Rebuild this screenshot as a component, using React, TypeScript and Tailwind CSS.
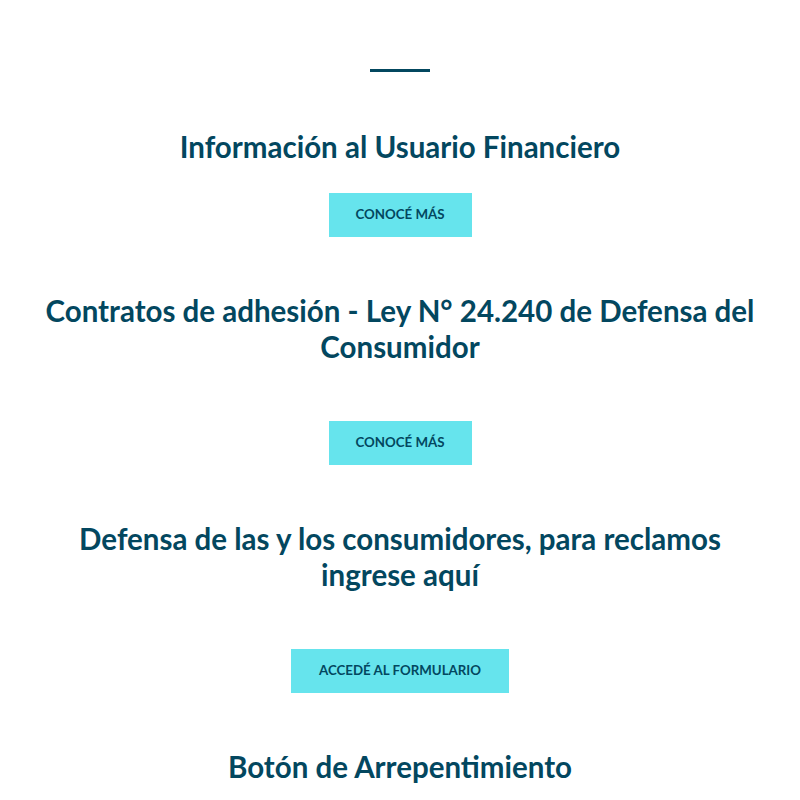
export default function App() {
  const titleCls =
    "text-center text-[#03475f] font-bold text-[29.5px] leading-[36px] px-[40px]";
  const btnCls =
    "mx-auto flex items-center justify-center h-[44px] bg-[#66e4ed] text-[#03475f] font-bold text-[13.3px]";
  const font = { fontFamily: '"Lato", "Open Sans", sans-serif' };
  return (
    <div className="w-[800px] h-[800px] overflow-hidden bg-white" style={font}>
      <div className="mx-auto mt-[69px] w-[60px] h-[3px] bg-[#03475f]" />
      <h2 className={`${titleCls} mt-[57px]`}>Información al Usuario Financiero</h2>
      <a className={`${btnCls} mt-[28px] w-[143px]`}>CONOCÉ MÁS</a>
      <h2 className={`${titleCls} mt-[56px]`}>
        Contratos de adhesión - Ley N° 24.240 de Defensa del Consumidor
      </h2>
      <a className={`${btnCls} mt-[56px] w-[143px]`}>CONOCÉ MÁS</a>
      <h2 className={`${titleCls} mt-[56px]`}>
        Defensa de las y los consumidores, para reclamos ingrese aquí
      </h2>
      <a className={`${btnCls} mt-[56px] w-[218px]`}>ACCEDÉ AL FORMULARIO</a>
      <h2 className={`${titleCls} mt-[56px]`}>Botón de Arrepentimiento</h2>
    </div>
  );
}
